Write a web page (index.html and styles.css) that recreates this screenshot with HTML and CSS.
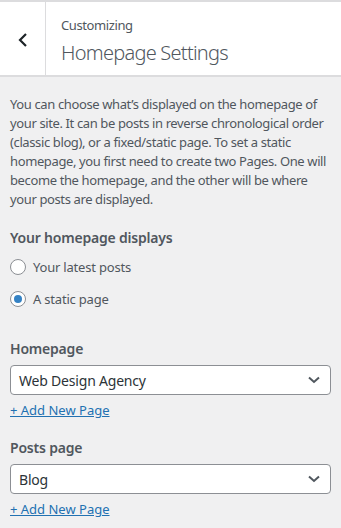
FILE: index.html
```html
<!DOCTYPE html>
<html>
<head>
<meta charset="utf-8">
<link rel="stylesheet" href="styles.css">
</head>
<body>
<div class="panel">
  <header class="head">
    <button class="back" aria-label="Back">
      <svg width="12" height="16" viewBox="0 0 12 16"><path d="M9 2 L3 8 L9 14" fill="none" stroke="#1d2327" stroke-width="2.2"/></svg>
    </button>
    <div class="titles">
      <div class="crumb">Customizing</div>
      <div class="title">Homepage Settings</div>
    </div>
  </header>
  <div class="body">
    <p class="desc">You can choose what’s displayed on the homepage of your site. It can be posts in reverse chronological order (classic blog), or a fixed/static page. To set a static homepage, you first need to create two Pages. One will become the homepage, and the other will be where your posts are displayed.</p>
    <div class="group">
      <div class="label">Your homepage displays</div>
      <label class="radio"><span class="dot"></span>Your latest posts</label>
      <label class="radio"><span class="dot on"></span>A static page</label>
    </div>
    <div class="field first">
      <div class="label">Homepage</div>
      <div class="select"><span>Web Design Agency</span><svg width="14" height="10" viewBox="0 0 14 10"><path d="M2 2.5 L7 7 L12 2.5" fill="none" stroke="#50575e" stroke-width="2"/></svg></div>
      <a class="add" href="#">+ Add New Page</a>
    </div>
    <div class="field">
      <div class="label">Posts page</div>
      <div class="select"><span>Blog</span><svg width="14" height="10" viewBox="0 0 14 10"><path d="M2 2.5 L7 7 L12 2.5" fill="none" stroke="#50575e" stroke-width="2"/></svg></div>
      <a class="add" href="#">+ Add New Page</a>
    </div>
  </div>
</div>
</body>
</html>
```
FILE: styles.css
```css
html, body { margin: 0; padding: 0; }
body {
  background: #f0f0f1;
  font-family: "Noto Sans", "Open Sans", sans-serif;
  color: #50575e;
  letter-spacing: -0.2px;
  width: 341px;
  height: 528px;
  overflow: hidden;
}
.head {
  display: flex;
  background: #fff;
  border-top: 2px solid #dcdcde;
  border-bottom: 2px solid #dcdcde;
  height: 73px;
  box-sizing: content-box;
}
.back {
  width: 46px;
  border: 0;
  border-right: 1px solid #dcdcde;
  background: #fff;
  padding: 0;
  display: flex;
  align-items: center;
  justify-content: center;
}
.back svg { margin-top: 2px; }
.titles { padding: 13px 0 0 15px; }
.crumb { font-size: 13px; line-height: 20px; color: #50575e; letter-spacing: -0.4px; }
.title { font-size: 20px; font-weight: 300; line-height: 28px; margin-top: 4px; color: #50575e; letter-spacing: -0.75px; }
.body { padding: 18px 10px 0 10px; }
.desc { margin: 0; font-size: 13px; line-height: 19px; letter-spacing: -0.38px; }
.group { margin-top: 19px; }
.label { font-size: 14px; font-weight: 600; line-height: 20px; color: #50575e; }
.radio { display: flex; align-items: center; font-size: 13px; line-height: 18px; margin-top: 10px; gap: 7px; }
.radio + .radio { margin-top: 14px; }
.dot {
  width: 16px; height: 16px; box-sizing: border-box;
  border: 1px solid #8c8f94; border-radius: 50%; background: #fff;
  display: flex; align-items: center; justify-content: center;
}
.dot.on::after { content: ""; width: 8px; height: 8px; border-radius: 50%; background: #3582c4; }
.field { margin-top: 31px; }
.field + .field { margin-top: 18px; }
.select {
  margin-top: 6px;
  height: 30px; box-sizing: border-box;
  border: 1px solid #8c8f94; border-radius: 4px; background: #fff;
  display: flex; align-items: center; justify-content: space-between;
  padding: 0 9px 0 8px;
  font-size: 14px; color: #2c3338;
}
.add { display: inline-block; margin-top: 6px; font-size: 13px; line-height: 18px; color: #2271b1; text-decoration: underline; letter-spacing: 0; }
```
